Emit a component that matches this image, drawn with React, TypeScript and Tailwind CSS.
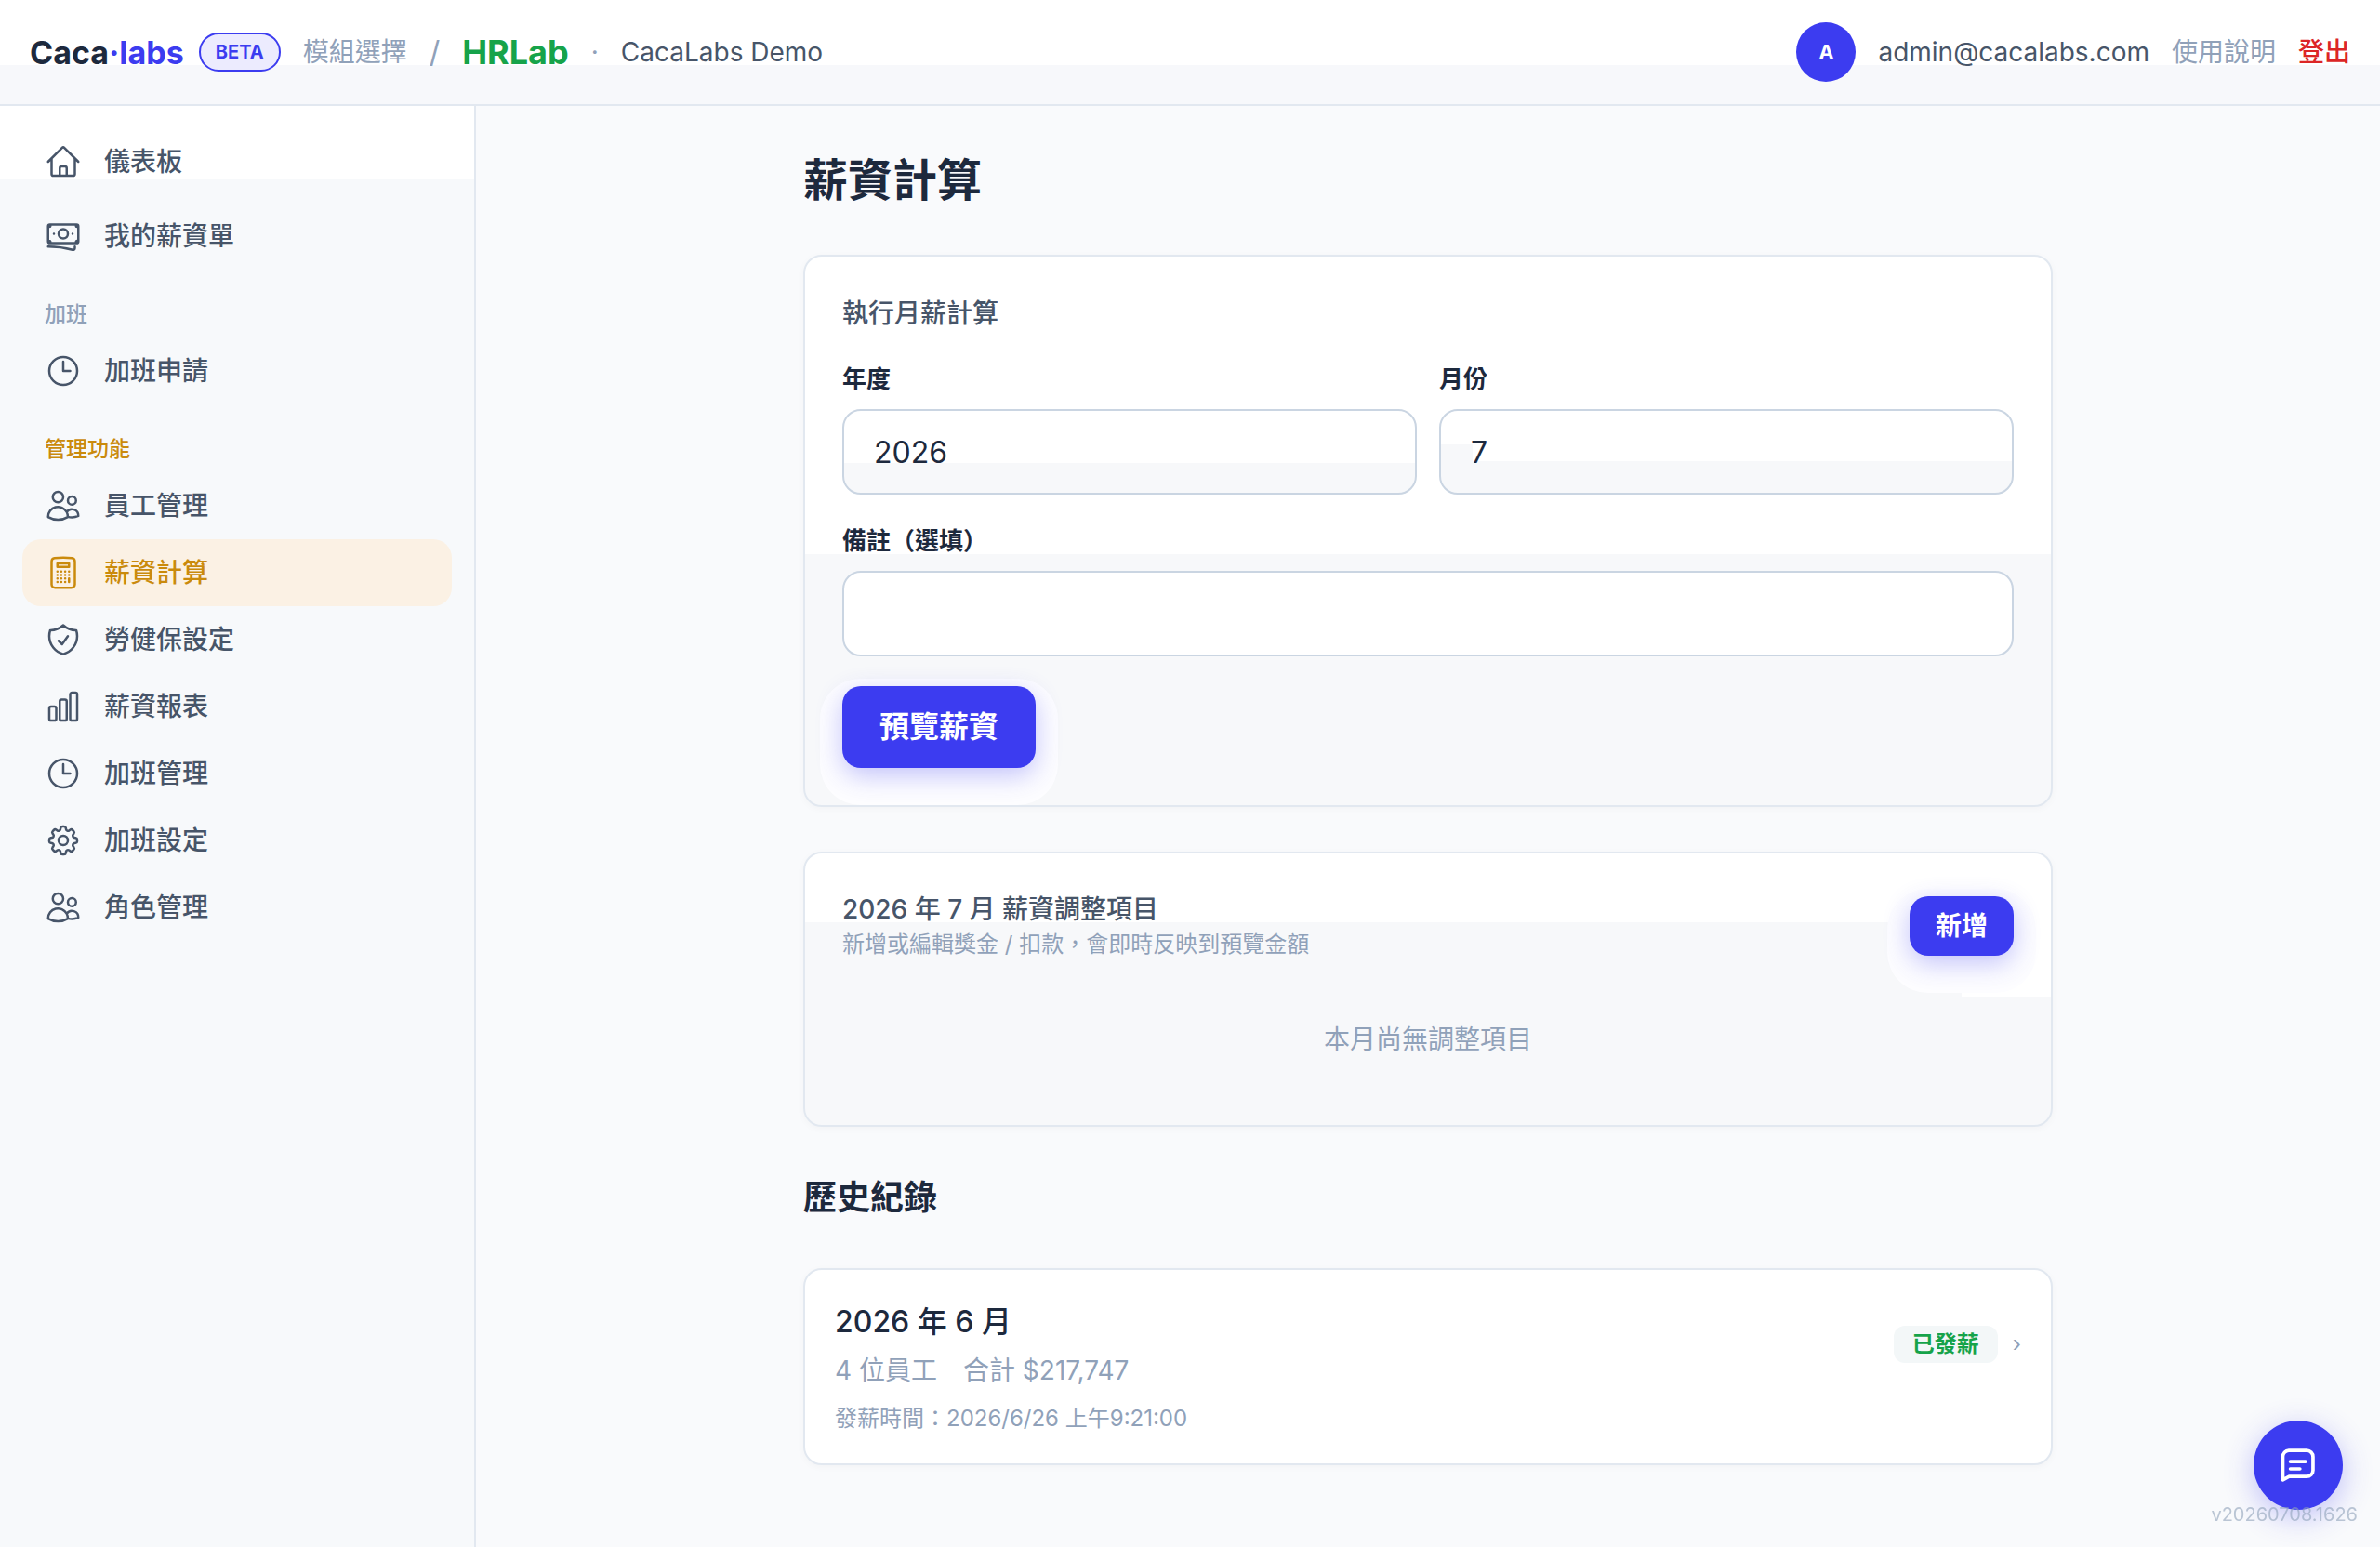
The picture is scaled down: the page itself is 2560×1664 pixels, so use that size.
import { useState } from 'react';
import type { ComponentType } from 'react';
import {
  HiOutlineBanknotes,
  HiOutlineCalculator,
  HiOutlineChartBar,
  HiOutlineClock,
  HiOutlineCog8Tooth,
  HiOutlineHome,
  HiOutlineShieldCheck,
  HiOutlineUsers,
} from 'react-icons/hi2';

type NavItem = {
  label: string;
  icon: ComponentType<{ className?: string }>;
  active?: boolean;
};

const mainItems: NavItem[] = [
  { label: '儀表板', icon: HiOutlineHome },
  { label: '我的薪資單', icon: HiOutlineBanknotes },
];

const overtimeItems: NavItem[] = [{ label: '加班申請', icon: HiOutlineClock }];

const adminItems: NavItem[] = [
  { label: '員工管理', icon: HiOutlineUsers },
  { label: '薪資計算', icon: HiOutlineCalculator, active: true },
  { label: '勞健保設定', icon: HiOutlineShieldCheck },
  { label: '薪資報表', icon: HiOutlineChartBar },
  { label: '加班管理', icon: HiOutlineClock },
  { label: '加班設定', icon: HiOutlineCog8Tooth },
  { label: '角色管理', icon: HiOutlineUsers },
];

function NavLink({ item }: { item: NavItem }) {
  const Icon = item.icon;
  return (
    <a
      href="#"
      className={`flex h-18 items-center gap-6 rounded-[20px] px-6 text-[28px] font-medium ${
        item.active ? 'bg-[#fbf1e4] text-[#ca8a0c]' : 'text-[#475569]'
      }`}
    >
      <Icon className="size-10" />
      {item.label}
    </a>
  );
}

function Header() {
  return (
    <header className="flex h-[114px] items-center justify-between border-b-2 border-slate-200 bg-[linear-gradient(#fff_70px,#f7f8fb_70px)] px-8 text-[28px]">
      <div className="flex items-center">
        <a href="#" className="text-[34px] font-bold text-slate-800">
          Caca<span className="text-[#3c3cf0]">·labs</span>
        </a>
        <span className="ml-4 flex h-[42px] items-center rounded-full border-2 border-[#3c3cf0] bg-[#ecebfe] px-4 text-[20px] font-bold text-[#3c3cf0]">
          BETA
        </span>
        <a href="#" className="ml-6 text-slate-400">模組選擇</a>
        <span className="ml-6 text-[32px] text-slate-400">/</span>
        <span className="ml-6 text-[36px] font-bold text-[#16a34a]">HRLab</span>
        <span className="ml-6 text-slate-400">·</span>
        <span className="ml-6 text-[#475569]">CacaLabs Demo</span>
      </div>
      <div className="flex items-center gap-6">
        <span className="flex size-16 items-center justify-center rounded-full bg-[#3c3cf0] text-[22px] font-bold text-white">
          A
        </span>
        <span className="text-[#475569]">admin@cacalabs.com</span>
        <a href="#" className="text-slate-400">使用說明</a>
        <button className="font-medium text-[#dc2626]">登出</button>
      </div>
    </header>
  );
}

function Sidebar() {
  return (
    <aside className="w-[512px] shrink-0 border-r-2 border-slate-200 bg-[linear-gradient(#fff_78px,#f7f9fb_78px)] p-6">
      <nav>
        <div className="space-y-2">
          {mainItems.map((item) => (
            <NavLink key={item.label} item={item} />
          ))}
        </div>
        <h2 className="mt-8 mb-2 px-6 text-[23px] leading-[33px] font-medium text-slate-400">加班</h2>
        {overtimeItems.map((item) => (
          <NavLink key={item.label} item={item} />
        ))}
        <h2 className="mt-8 mb-2 px-6 text-[23px] leading-[33px] font-medium text-[#ca8a0c]">管理功能</h2>
        {adminItems.map((item) => (
          <NavLink key={item.label} item={item} />
        ))}
      </nav>
    </aside>
  );
}

function RunPayrollCard() {
  const [year, setYear] = useState('2026');
  const [month, setMonth] = useState('7');
  const [note, setNote] = useState('');

  return (
    <section className="rounded-[20px] border-2 border-slate-200 bg-[linear-gradient(#fff_320px,#f7f8fa_320px)] p-10 shadow-[0_2px_8px_rgba(15,23,42,0.03)]">
      <h2 className="text-[28px] leading-[42px] font-medium text-[#475569]">執行月薪計算</h2>
      <div className="mt-8 grid grid-cols-2 gap-6">
        <div>
          <label htmlFor="year" className="mb-[14px] block text-[26px] leading-9 font-semibold text-slate-800">
            年度
          </label>
          <input
            id="year"
            value={year}
            onChange={(e) => setYear(e.target.value)}
            className="h-[92px] w-full rounded-[20px] border-2 border-slate-300 bg-[linear-gradient(#fff_56px,#f7f8fa_56px)] px-8 text-[32px] text-slate-800"
          />
        </div>
        <div>
          <label htmlFor="month" className="mb-[14px] block text-[26px] leading-9 font-semibold text-slate-800">
            月份
          </label>
          <input
            id="month"
            value={month}
            onChange={(e) => setMonth(e.target.value)}
            className="h-[92px] w-full rounded-[20px] border-2 border-slate-300 px-8 text-[32px] text-slate-800 [background:linear-gradient(transparent_36px,#f7f8fa_36px)_left/34px_100%_no-repeat,linear-gradient(#fff_54px,#f7f8fa_54px)]"
          />
        </div>
      </div>
      <label htmlFor="note" className="mt-8 mb-[14px] block text-[26px] leading-9 font-semibold text-slate-800">
        備註（選填）
      </label>
      <input
        id="note"
        value={note}
        onChange={(e) => setNote(e.target.value)}
        className="block h-[92px] w-full rounded-[20px] border-2 border-slate-300 bg-white px-8 text-[32px] text-slate-800"
      />
      <button className="mt-8 block h-22 rounded-[20px] bg-[#3c3cf0] px-10 text-[32px] font-semibold text-white shadow-[0_8px_28px_rgba(60,60,240,0.3),0_16px_0_24px_#fdfdff]">
        預覽薪資
      </button>
    </section>
  );
}

function AdjustmentsCard() {
  return (
    <section className="mt-12 rounded-[20px] border-2 border-slate-200 p-10 shadow-[0_2px_8px_rgba(15,23,42,0.03)] [background:linear-gradient(#fff,#fff)_right_top/96px_154px_no-repeat,linear-gradient(#fff_74px,#f7f8fa_74px)]">
      <div className="flex items-center justify-between">
        <div>
          <h2 className="text-[28px] leading-10 font-medium text-[#475569]">2026 年 7 月 薪資調整項目</h2>
          <p className="text-[24px] leading-9 text-slate-400">新增或編輯獎金 / 扣款，會即時反映到預覽金額</p>
        </div>
        <button className="h-16 rounded-[20px] bg-[#3c3cf0] px-7 text-[28px] font-semibold text-white shadow-[0_8px_28px_rgba(60,60,240,0.3),0_16px_0_24px_#fdfdff]">
          新增
        </button>
      </div>
      <p className="mt-8 py-8 text-center text-[28px] leading-10 text-slate-400">本月尚無調整項目</p>
    </section>
  );
}

function HistoryCard() {
  return (
    <a href="#" className="mt-12 block rounded-[20px] border-2 border-slate-200 bg-white px-8 pt-8 pb-7 shadow-[0_2px_8px_rgba(15,23,42,0.03)]">
      <div className="flex items-center justify-between">
        <div>
          <h3 className="text-[32px] leading-12 font-medium text-slate-800">2026 年 6 月</h3>
          <p className="mt-2 text-[28px] leading-10 text-slate-400">4 位員工　合計 $217,747</p>
        </div>
        <div className="flex items-center gap-4">
          <span className="flex h-10 items-center rounded-xl bg-[#f3f7f8] px-5 text-[24px] font-semibold text-[#16a34a]">
            已發薪
          </span>
          <span className="text-[24px] leading-10 text-slate-400">›</span>
        </div>
      </div>
      <p className="mt-3 text-[24px] leading-10 text-slate-400">發薪時間：2026/6/26 上午9:21:00</p>
    </a>
  );
}

function ChatButton() {
  return (
    <button
      aria-label="Chat"
      className="fixed right-10 bottom-10 flex size-24 items-center justify-center rounded-full bg-[#3c3cf0] text-white shadow-[0_8px_32px_rgba(60,60,240,0.3)]"
    >
      <svg
        className="size-11"
        viewBox="0 0 24 24"
        fill="none"
        stroke="currentColor"
        strokeWidth="2"
        strokeLinecap="round"
        strokeLinejoin="round"
      >
        <path d="M6.500 3.350h10.500a3.700 3.700 0 0 1 3.700 3.700v7.900a3.700 3.700 0 0 1-3.700 3.700H6.700l-3.700 2V7.050a3.600 3.600 0 0 1 3.500-3.700z" />
        <path d="M7.400 9.850h8.900M7.400 14.200h5.600" />
      </svg>
    </button>
  );
}

function App() {
  return (
    <div lang="zh-TW" className="flex min-h-screen flex-col bg-[#f9fafc] font-['Inter','Noto_Sans_CJK_TC',sans-serif]">
      <Header />
      <div className="flex flex-1">
        <Sidebar />
        <main className="flex-1 px-12 pt-12 pb-22">
          <div className="mx-auto max-w-[1344px]">
            <h1 className="mb-12 text-[48px] leading-16 font-bold text-slate-800">薪資計算</h1>
            <RunPayrollCard />
            <AdjustmentsCard />
            <h2 className="mt-12 text-[36px] leading-14 font-bold text-slate-800">歷史紀錄</h2>
            <HistoryCard />
          </div>
        </main>
      </div>
      <ChatButton />
      <span className="fixed right-6 bottom-5 text-[20px] text-slate-400/60">v20260708.1626</span>
    </div>
  );
}

export default App;
